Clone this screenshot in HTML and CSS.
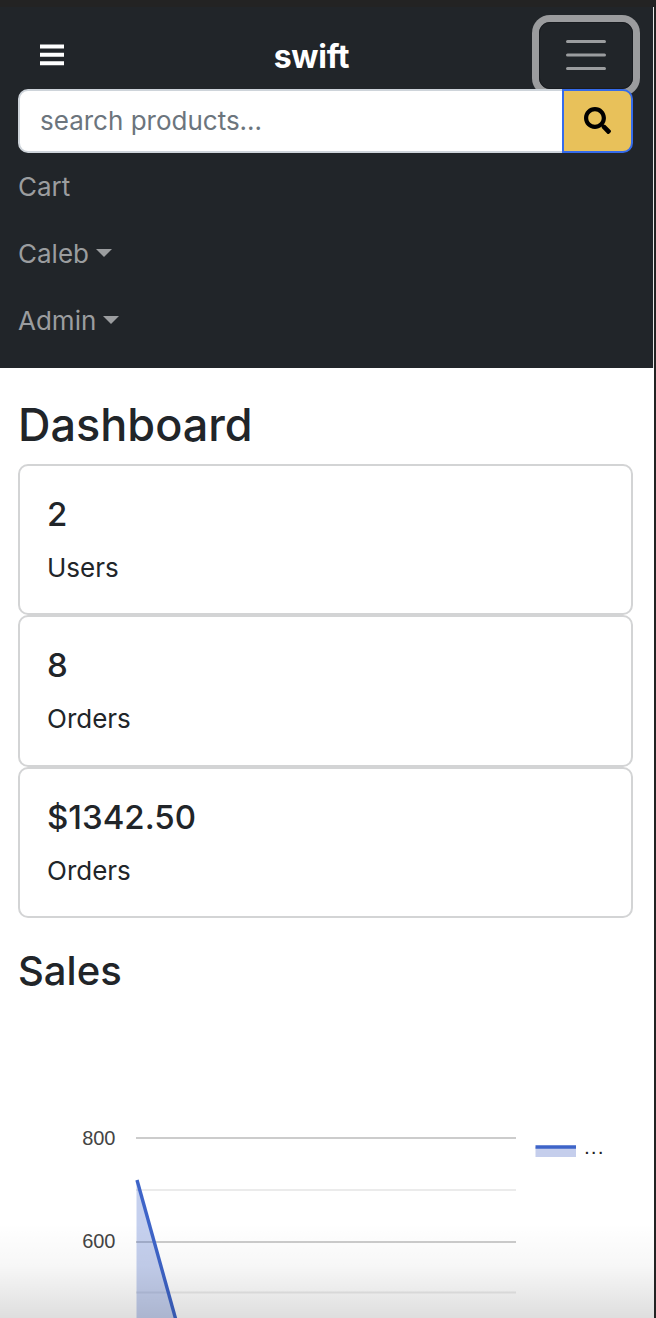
FILE: index.html
```html
<!DOCTYPE html>
<html lang="en">
<head>
<meta charset="utf-8">
<title>swift</title>
<link rel="stylesheet" href="styles.css">
</head>
<body>
<div class="page">
  <header class="navbar">
    <div class="bar">
      <button class="menu" aria-label="Open sidebar">
        <svg width="24" height="22" viewBox="0 0 24 22"><path d="M0 .5h24v4H0zM0 8.800h24v4H0zM0 17.200h24v4H0z" fill="#fff"/></svg>
      </button>
      <a class="brand">swift</a>
      <button class="toggler" aria-label="Toggle navigation">
        <svg width="42" height="32" viewBox="0 0 42 32"><path d="M2.500 2.600h37M2.500 16h37M2.500 29.500h37" stroke="#9b9d9f" stroke-width="3" stroke-linecap="round"/></svg>
      </button>
    </div>
    <form class="search">
      <input class="field" type="text" placeholder="search products...">
      <button class="go" type="button" aria-label="Search">
        <svg width="27" height="27" viewBox="0 0 512 512"><path d="M505 442.700L405.300 343c-4.500-4.500-10.600-7-17-7H372c27.600-35.300 44-79.700 44-128C416 93.100 322.900 0 208 0S0 93.100 0 208s93.100 208 208 208c48.300 0 92.700-16.400 128-44v16.300c0 6.400 2.500 12.500 7 17l99.700 99.700c9.400 9.400 24.600 9.400 33.900 0l28.300-28.300c9.400-9.400 9.400-24.600.1-34zM208 336c-70.700 0-128-57.200-128-128 0-70.700 57.200-128 128-128 70.700 0 128 57.200 128 128 0 70.700-57.200 128-128 128z"/></svg>
      </button>
    </form>
    <nav class="links">
      <a class="link cart">Cart</a>
      <a class="link caleb">Caleb<span class="caret"></span></a>
      <a class="link admin">Admin<span class="caret"></span></a>
    </nav>
  </header>
  <main class="content">
    <h1 class="title">Dashboard</h1>
    <section class="card"><h2 class="value">2</h2><p class="label users">Users</p></section>
    <section class="card"><h2 class="value">8</h2><p class="label">Orders</p></section>
    <section class="card"><h2 class="value">$1342.50</h2><p class="label">Orders</p></section>
    <h2 class="subtitle">Sales</h2>
    <svg class="chart" width="615" height="308" viewBox="18 1010 615 308">
      <path d="M136 1138h380M136 1242h380" stroke="#ccc" stroke-width="2"/>
      <path d="M136 1190h380M136 1292.500h380" stroke="#ebebeb" stroke-width="2"/>
      <path d="M136.500 1180L176 1318H136.500z" fill="#3e64c8" fill-opacity=".3"/>
      <path d="M137 1180L176.500 1322" stroke="#3e64c8" stroke-width="3.400" fill="none"/>
      <text class="tick" x="115.500" y="1145" text-anchor="end">800</text>
      <text class="tick" x="115.500" y="1248" text-anchor="end">600</text>
      <path d="M535.500 1147h40.500v10h-40.500z" fill="#c5ceec"/>
      <path d="M535.500 1147h40.500" stroke="#3e64c8" stroke-width="3.600"/>
      <text class="more" x="584" y="1154">...</text>
    </svg>
  </main>
  <div class="fade"></div>
</div>
</body>
</html>
```
FILE: styles.css
```css
* { box-sizing: border-box; }
body { margin: 0; background: #232323; font-family: Inter, "Liberation Sans", sans-serif; color: #212529; }
button { padding: 0; border: 0; background: none; display: flex; align-items: center; justify-content: center; }
h1, h2, p { margin: 0; font-weight: 500; }
.page { position: relative; width: 654px; height: 1318px; padding-top: 7px; border-right: 0; overflow: hidden; }
.navbar { height: 360.500px; padding: 14px 20px 0 18px; background: #212529; border-right: 1px solid #e6e6e6; }
.bar { display: flex; align-items: center; justify-content: space-between; height: 68px; }
.menu { width: 67px; height: 68px; }
.brand { margin-left: -27px; font-size: 32px; font-weight: 700; color: #fff; letter-spacing: -.3px; padding-top: 2px; margin-right: -26px; }
.toggler { width: 94px; height: 67px; border-radius: 11px; box-shadow: 0 0 0 7px #9b9c9e; border: 1.500px solid #191c20; }
.search { position: relative; display: flex; height: 63.500px; }
.field { flex: 1; min-width: 0; padding: 0 20px; border: 2px solid #ced4da; border-radius: 10px 0 0 10px; background: #fff; font: 400 26px Inter, sans-serif; }
.field::placeholder { color: #6c757d; opacity: 1; }
.go { width: 71px; margin-left: -2px; background: #e8c15a; border: 2px solid #356bea; border-radius: 0 10px 10px 0; }
.links { display: flex; flex-direction: column; }
.link { display: flex; align-items: center; height: 67.400px; font-size: 26px; color: #9b9d9f; }
.caret { margin: -2px 0 0 7px; border: 8px solid transparent; border-top-color: #9b9d9f; border-bottom: 0; }
.content { height: 951px; padding: 28px 21px 0 18px; background: #fff; }
.title { height: 68.500px; font-size: 45px; line-height: 57px; }
.card { height: 151.300px; padding: 28px 27px; border: 2px solid #d3d4d5; border-radius: 10px; }
.value { font-size: 33px; line-height: 40px; margin-bottom: 14px; }
.label { font-size: 26px; line-height: 40px; font-weight: 400; }
.subtitle { margin-top: 28px; height: 64px; font-size: 40px; line-height: 50px; }
.chart { display: block; }
.tick { font: 20px "Liberation Sans", sans-serif; fill: #444; }
.more { font: 21px "Liberation Sans", sans-serif; fill: #222; letter-spacing: 1px; }
.fade { position: absolute; left: 0; right: 0; bottom: 0; height: 95px; background: linear-gradient(rgba(0,0,0,0), rgba(0,0,0,.03) 45%, rgba(0,0,0,.13)); }
```
